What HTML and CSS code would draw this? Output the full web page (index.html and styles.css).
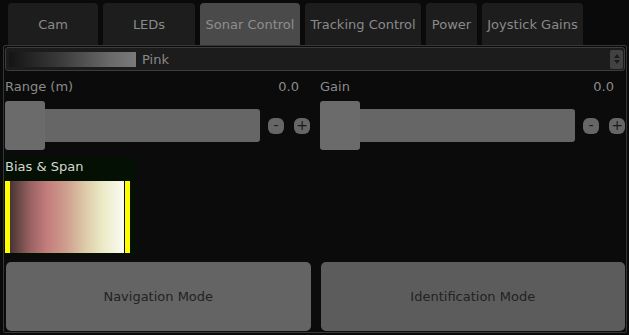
FILE: index.html
```html
<!DOCTYPE html>
<html>
<head>
<meta charset="utf-8">
<link rel="stylesheet" href="styles.css">
</head>
<body>
<div class="tabs">
  <div class="tab tab-cam">Cam</div>
  <div class="tab tab-leds">LEDs</div>
  <div class="tab tab-sonar active">Sonar Control</div>
  <div class="tab tab-track">Tracking Control</div>
  <div class="tab tab-power">Power</div>
  <div class="tab tab-joy">Joystick Gains</div>
</div>
<div class="panel">
  <div class="combo">
    <div class="swatch"></div>
    <span class="combo-text">Pink</span>
    <div class="spin">
      <svg width="8" height="14" viewBox="0 0 8 14"><path d="M4 2 L7 6 H1 Z M4 12 L7 8 H1 Z" fill="#1c1c1c"/></svg>
    </div>
  </div>
  <div class="controls">
    <div class="ctl">
      <div class="ctl-head"><span>Range (m)</span><span>0.0</span></div>
      <div class="ctl-row">
        <div class="track"><div class="handle"></div></div>
        <div class="rbtn">-</div>
        <div class="rbtn">+</div>
      </div>
    </div>
    <div class="ctl">
      <div class="ctl-head"><span>Gain</span><span>0.0</span></div>
      <div class="ctl-row">
        <div class="track"><div class="handle"></div></div>
        <div class="rbtn">-</div>
        <div class="rbtn">+</div>
      </div>
    </div>
  </div>
  <div class="bias">
    <div class="bias-label">Bias &amp; Span</div>
    <div class="bias-widget">
      <div class="ybar"></div>
      <div class="grad"></div>
      <div class="ybar"></div>
    </div>
  </div>
  <div class="modes">
    <div class="mode nav">Navigation Mode</div>
    <div class="mode ident">Identification Mode</div>
  </div>
</div>
</body>
</html>
```

FILE: styles.css
```css
html, body {
  margin: 0;
  padding: 0;
}
body {
  width: 629px;
  height: 335px;
  background: #0a0a0a;
  font-family: "DejaVu Sans", "Liberation Sans", sans-serif;
  font-size: 12px;
  overflow: hidden;
}
.tabs {
  display: flex;
  gap: 5px;
  padding: 3px 0 0 8px;
  height: 42px;
}
.tab {
  display: flex;
  align-items: center;
  justify-content: center;
  background: #1d1d1d;
  color: #8a8a8a;
  border-radius: 4px 4px 0 0;
  font-size: 13px;
}
.tab-cam { width: 90px; }
.tab-leds { width: 92px; }
.tab-sonar { width: 100px; }
.tab-track { width: 116px; }
.tab-power { width: 51px; }
.tab-joy { width: 101px; }
.tab.active {
  background: #4a4a4a;
  color: #8e8e8e;
}
.panel {
  margin: 0 2px 0 3px;
  height: 284px;
  border: 1px solid #363636;
  border-radius: 2px;
  padding: 1px;
  background: #0b0b0b;
}
.combo {
  display: flex;
  align-items: center;
  height: 22px;
  border: 1px solid #3c3c3c;
  border-radius: 3px;
  background: #1c1c1c;
  padding: 0 1px 0 3px;
}
.swatch {
  width: 127px;
  height: 15px;
  background: linear-gradient(to right, #141414, #3a3a3a 40%, #6a6a6a 80%, #7a7a7a);
}
.combo-text {
  margin-left: 6px;
  color: #8a8a8a;
  font-size: 13px;
  flex: 1;
}
.spin {
  width: 13px;
  height: 19px;
  background: #424242;
  border-radius: 2px;
  display: flex;
  align-items: center;
  justify-content: center;
}
.controls {
  display: flex;
  gap: 10px;
  margin-top: 8px;
}
.ctl {
  flex: 1;
}
.ctl-head {
  display: flex;
  justify-content: space-between;
  color: #8a8a8a;
  font-size: 13px;
  height: 16px;
  line-height: 16px;
  padding-right: 11px;
}
.ctl-row {
  display: flex;
  align-items: center;
  height: 49px;
  margin-top: 6px;
}
.track {
  position: relative;
  width: 255px;
  height: 33px;
  background: #666666;
  border-radius: 0 3px 3px 0;
}
.handle {
  position: absolute;
  left: 0;
  top: -8px;
  width: 40px;
  height: 49px;
  background: #6b6b6b;
  border-radius: 3px;
}
.rbtn {
  width: 16px;
  height: 16px;
  border-radius: 6px;
  background: #666;
  color: #1a1a1a;
  font-size: 14px;
  line-height: 15px;
  text-align: center;
  margin-left: 8px;
}
.rbtn + .rbtn {
  margin-left: 10px;
}
.bias {
  width: 131px;
  height: 97px;
  background: #031003;
  margin-top: 8px;
}
.bias-label {
  color: #d6d6d6;
  font-size: 13px;
  height: 23px;
  line-height: 17px;
}
.bias-widget {
  display: flex;
  height: 72px;
}
.ybar {
  width: 5px;
  background: #ffff00;
}
.grad {
  width: 114px;
  margin-right: 1px;
  background: linear-gradient(to right, #483434 0%, #9a6262 18%, #c27c7c 32%, #cfa08e 50%, #dcc8a6 65%, #ecebc8 82%, #fbfbf6 100%);
}
.modes {
  display: flex;
  gap: 10px;
  margin-top: 7px;
  padding-left: 1px;
}
.mode {
  flex: 1;
  height: 69px;
  border-radius: 5px;
  display: flex;
  align-items: center;
  justify-content: center;
  color: #222222;
  font-size: 13px;
}
.mode.nav { background: #646464; }
.mode.ident { background: #5c5c5c; }
```
